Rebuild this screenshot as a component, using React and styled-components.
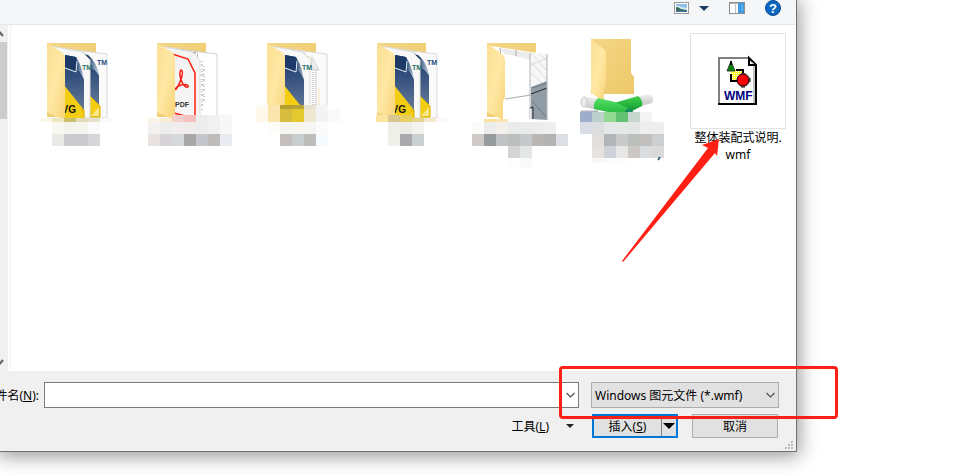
import React from 'react';
import styled, { createGlobalStyle } from "styled-components";

const GlobalStyle = createGlobalStyle`
    * {
        box-sizing: border-box;
    }

    body {
        margin: 0;
        background: #fff;
        color: #000;
        font-family: "Noto Sans", "Noto Sans CJK SC", sans-serif;
        font-size: 12px;
        line-height: 17px;
    }

    button, input, select {
        font: inherit;
        color: inherit;
    }

    svg {
        display: block;
        flex: none;
    }
`;

const Page = styled.div`
    position: relative;
    display: flex;
    flex-direction: column;
    min-height: 100vh;
    padding: 0 175px 22px 0;
    overflow: hidden;
`;

const Dialog = styled.main`
    flex: 1;
    display: flex;
    flex-direction: column;
    background: #f0f0f0;
    border: solid #707070;
    border-width: 0 1px 1px 0;
    box-shadow: 0 2px 18px 2px rgba(0, 0, 0, 0.42);
`;

const Toolbar = styled.header`
    display: flex;
    justify-content: flex-end;
    gap: 20px;
    height: 25px;
    padding-right: 15px;
    background: #f5f6f8;
    border-bottom: 1px solid #e4e6ea;
`;

const IconButton = styled.button`
    display: flex;
    align-items: center;
    gap: 10px;
    height: 16px;
    padding: 0;
    border: 0;
    background: none;
`;

const Body = styled.div`
    flex: 1;
    display: flex;
    background: #fff;
`;

const ScrollTrack = styled.div`
    display: flex;
    flex-direction: column;
    width: 8px;
    padding: 6px 0;
    background: #f0f0f0;
    overflow: hidden;
`;

const ScrollThumb = styled.div`
    flex: none;
    width: 7px;
    height: 77px;
    margin: 5px 0 auto;
    background: #cdcdcd;
`;

const FileList = styled.ul`
    flex: 1;
    display: grid;
    grid-template-columns: repeat(auto-fill, 96px);
    align-content: start;
    gap: 14px;
    margin: 0 0 0 2px;
    padding: 8px 0 0 19px;
    border-left: 1px solid #f3f3f3;
    list-style: none;
`;

const FileItem = styled.li`
    text-align: center;

    svg {
        overflow: visible;
    }
`;

const Thumb = styled.div`
    height: 96px;
    border: 1px solid #e2e2e2;
    border-radius: 1px;

    svg {
        margin: -1px;
    }
`;

const FileName = styled.div`
    padding: 0 4px;
    white-space: nowrap;
`;

const Footer = styled.footer`
    position: relative;
    display: flex;
    flex-direction: column;
    gap: 6px;
    padding: 11px 17px 13px 0;
`;

const Row = styled.div`
    display: flex;
    align-items: center;
    justify-content: flex-end;
`;

const ButtonRow = styled(Row)`
    padding-right: 1px;
`;

const NameLabel = styled.label`
    display: flex;
    justify-content: flex-end;
    width: 39px;
    margin-right: 5px;
    overflow: hidden;
    white-space: nowrap;
`;

const Field = styled.div`
    position: relative;
    flex: ${({ $width }) => $width ? 'none' : '1'};
    width: ${({ $width }) => $width || 'auto'};
    margin-right: ${({ $gap }) => $gap || '0'};

    svg {
        position: absolute;
        top: 10px;
        right: 4px;
        pointer-events: none;
    }
`;

const NameInput = styled.input`
    display: block;
    width: 100%;
    height: 26px;
    padding: 0 20px 0 4px;
    border: 1px solid #7a7a7a;
    background: #fff;
    outline: 0;
`;

const TypeSelect = styled.select`
    display: block;
    width: 100%;
    height: 26px;
    padding: 0 20px 0 3px;
    border: 1px solid #adadad;
    border-radius: 0;
    background: #e1e1e1;
    appearance: none;
`;

const ToolsButton = styled.button`
    display: flex;
    align-items: center;
    gap: 17px;
    margin-right: 18px;
    padding: 0;
    border: 0;
    background: none;
`;

const PushButton = styled.button`
    width: 86px;
    height: 24px;
    padding: 0;
    border: 1px solid #adadad;
    background: #e1e1e1;
`;

const SplitButton = styled.div`
    display: flex;
    width: 86px;
    height: 24px;
    margin-right: 14px;
    border: 2px solid #0078d7;
    background: #e1e1e1;
`;

const SplitPart = styled.button`
    display: flex;
    align-items: center;
    justify-content: center;
    flex: ${({ $menu }) => $menu ? 'none' : '1'};
    padding: ${({ $menu }) => $menu ? '0 1px' : '0'};
    border: 0;
    border-left: ${({ $menu }) => $menu ? '1px solid #808080' : '0'};
    background: none;
`;

const Grip = styled.svg`
    position: absolute;
    right: 3px;
    bottom: 2px;
`;

const MarkBox = styled.div`
    position: absolute;
    right: 134px;
    bottom: 55px;
    width: 279px;
    height: 53px;
    border: 3px solid #ff2015;
    border-radius: 4px;
    pointer-events: none;
`;

const MarkArrow = styled.svg`
    position: absolute;
    left: 620px;
    top: 137px;
    pointer-events: none;
`;

// rows of blurred-out name blocks: [y, height, first x, colours]
const mosaics = {
    drawings: [
        [85, 4, 10, ['#fbf7e6', '#eee7bd', '#cabf6c', '#e0dbb8', '#e6e1cf', '#fafafa']],
        [89, 12, 22, ['#f8f8f0', '#f4f3eb', '#f6f5ed', '#fafafa']],
        [101, 12, 22, ['#e9e9e7', '#cbcacc', '#cbcacc', '#d6d6d8']],
    ],
    pdf: [
        [82, 7, 32, ['#f5cfcc', '#f6bfbf', '#eeeded', '#f1f1f1', '#f7f7f7']],
        [85, 4, 8, ['#fbf4e6', '#f9ecd0']],
        [89, 12, 8, ['#f2f1ef', '#ededeb', '#f3eeee', '#efebeb', '#ececec', '#f0f0f0', '#f7f7f7']],
        [101, 12, 8, ['#e8e3e1', '#d8d3d8', '#d6d9d9', '#a8a8a8', '#c4c6cc', '#bdbcba', '#eaebf1']],
    ],
    mixed: [
        [72, 4, 6, ['#fdfaf0', '#fbe6ae', '#b5a02e', '#b8a436', '#e6e2d2', '#f3f3f3']],
        [76, 13, 6, ['#fdf8ea', '#fae5ae', '#d6bd40', '#e3c92f', '#eee8d3', '#f3f3f3', '#fafafa']],
        [89, 12, 18, ['#fdfcf9', '#f5f5f1', '#f6f5f0', '#f5f5f3', '#fbfbfb']],
        [101, 12, 30, ['#c4bfbe', '#c8cdce', '#bcbcba', '#f5fbff']],
    ],
    backup: [
        [82, 7, 16, ['#fbe3a0', '#d8c890', '#e5cf62']],
        [85, 4, 52, ['#e6d590', '#f4e9cd', '#fafafa']],
        [89, 12, 28, ['#efefe9', '#ecebe6', '#f2f2ee']],
        [101, 12, 28, ['#eff0ea', '#a9a8ac', '#cacfcf']],
    ],
    photos: [
        [86, 3, 14, ['#fbe0a0', '#fae3b4']],
        [89, 12, 2, ['#fbfbf9', '#ececec', '#f3efea', '#e9eaea', '#eaebeb', '#ececec', '#efefef']],
        [101, 12, 2, ['#cfcac8', '#969b9b', '#c0c2c4', '#bcbdbd', '#c6c8c9', '#b9b6b4', '#b3b3b3', '#dddfe5']],
        [113, 12, 38, ['#d5d5d5', '#e3e7e6']],
        [125, 10, 38, ['#fdfdfd', '#fafafa']],
    ],
    shared: [
        [79, 10, 0, ['#9eadca', '#bcd0cc', '#93d994', '#62c272', '#c7d6cf', '#f3f4f3']],
        [89, 12, 0, ['#d7dce6', '#dcdedf', '#e4e8e8', '#e5eae7', '#e4e6e6', '#eeeeee', '#eeeeee']],
        [101, 12, 12, ['#e3dfdc', '#b3b4b6', '#cbcacb', '#bcc0bd', '#c1c0be', '#cdced0']],
        [113, 12, 12, ['#e6e2df', '#cfd2d8', '#e7e7e6', '#cdc8c6', '#dadde0', '#dadada']],
        [125, 5, 12, ['#f8f8f8', '#fbfbfb', '#fcfcfc']],
    ],
};

const Mosaic = ({ rows }) => (
    <g shapeRendering="crispEdges">
        {rows.map(([y, height, start, colors]) => colors.map((color, i) => (
            <rect key={`${y}-${start}-${i}`} x={start + i * 12} y={y} width="12" height={height} fill={color} />
        )))}
    </g>
);

const Defs = styled.svg`
    position: absolute;
`;

const Gradients = () => (
    <Defs width="0" height="0" aria-hidden="true">
        <defs>
            <linearGradient id="flap" x1="0" y1="0" x2="1" y2="1">
                <stop offset="0" stopColor="#fadf92" />
                <stop offset="0.5" stopColor="#ffe8a4" />
                <stop offset="1" stopColor="#f7d377" />
            </linearGradient>
            <linearGradient id="back" x1="0" y1="0" x2="1" y2="1">
                <stop offset="0" stopColor="#f4d687" />
                <stop offset="1" stopColor="#ecc867" />
            </linearGradient>
            <linearGradient id="navy" x1="0" y1="0" x2="0" y2="1">
                <stop offset="0" stopColor="#203e6e" />
                <stop offset="0.35" stopColor="#304d7b" />
                <stop offset="1" stopColor="#667b99" />
            </linearGradient>
            <linearGradient id="curl" x1="0" y1="0" x2="1" y2="0">
                <stop offset="0" stopColor="#1c416b" />
                <stop offset="1" stopColor="#c9d7e4" />
            </linearGradient>
            <linearGradient id="pipe" x1="0" y1="0" x2="0" y2="1">
                <stop offset="0" stopColor="#5cdc6a" />
                <stop offset="0.5" stopColor="#37c94c" />
                <stop offset="1" stopColor="#2bb045" />
            </linearGradient>
            <linearGradient id="pipe-dark" x1="0" y1="0" x2="0" y2="1">
                <stop offset="0" stopColor="#45d050" />
                <stop offset="0.5" stopColor="#22b33b" />
                <stop offset="1" stopColor="#0c8039" />
            </linearGradient>
            <linearGradient id="cap" x1="0" y1="0" x2="0" y2="1">
                <stop offset="0" stopColor="#f1f1f1" />
                <stop offset="1" stopColor="#c4c4c4" />
            </linearGradient>
            <pattern id="dither" width="2" height="2" patternUnits="userSpaceOnUse">
                <rect width="2" height="2" fill="#ffff20" />
                <rect width="1" height="1" fill="#fff" />
            </pattern>
        </defs>
    </Defs>
);

const BackPage = () => (
    <path d="M29 15 L77 21 V85 H55 V20Z" fill="#fafafa" stroke="#d9d9d9" />
);

const DwgFront = () => (
    <g>
        <path d="M20 13 L52 19 L60 27 V85 H32Z" fill="#f8f8f8" stroke="#dedede" />
        <path d="M35 22 L46 24 Q49 38 54 46 V78 H34Z" fill="url(#navy)" />
        <path d="M35 22 L46 24 Q47 30 47 38 L35 35Z" fill="#1c3968" />
        <path d="M46 24 Q46 31 47 37 Q52 39 54 48 Q53 35 46 24Z" fill="url(#curl)" />
        <path d="M35 35 L46 39 L47 28" fill="none" stroke="#e5edf5" />
        <path d="M34 52 L54 77 V85 H34Z" fill="#f3cd12" />
        <path d="M51 77 H54 V85" fill="none" stroke="#d3a900" />
        <text x="46" y="80" textAnchor="end" fontFamily="Liberation Sans" fontWeight="bold" fontSize="10" fill="#111">VG</text>
        <text x="52" y="37" fontFamily="Liberation Sans" fontWeight="bold" fontSize="7" fill="#26706f">TM</text>
    </g>
);

const DwgBack = () => (
    <g>
        <path d="M36 18 L58 22 Q66 30 69 42 V75 H59 V26Z" fill="url(#navy)" />
        <path d="M58 22 Q61 26 61 35 Q66 37 69 43 Q67 29 58 22Z" fill="url(#curl)" />
        <path d="M60 63 L70 73 V84 H60Z" fill="#f3cd12" stroke="#d9b000" />
        <path d="M61 83 L69 74 V83Z" fill="#f9e68a" />
        <text x="67" y="32" fontFamily="Liberation Sans" fontWeight="bold" fontSize="7" fill="#1c4a78">TM</text>
    </g>
);

const FolderFlap = () => (
    <path d="M17 10 L33 20 Q35 22 35 26 V84 L32 86 L17 79Z" fill="url(#flap)" />
);

const DwgFolder = ({ single }) => (
    <g>
        <path d="M17 10 H66 V84 H17Z" fill="url(#back)" />
        <BackPage />
        {single ? (
            <g>
                <path d="M30 16 L60 24 L68 37 H61" fill="none" stroke="#eadfb7" />
                <path d="M62 24 L69 37 L61 36Z" fill="#ececec" stroke="#d4d4d4" />
                <path d="M63 39 V72 M66 37 V72" stroke="#cfcfcf" strokeDasharray="1 1" strokeWidth="2" />
                <path d="M69 55 V75" stroke="#efe6bd" />
            </g>
        ) : <DwgBack />}
        <DwgFront />
        <FolderFlap />
    </g>
);

const PdfFolder = () => (
    <g>
        <path d="M17 10 H66 V84 H17Z" fill="url(#back)" />
        <path d="M29 15 L77 21 V85 H55 V20Z" fill="#fff" stroke="#d0d0d0" />
        <path d="M42 17 L58 20 L57 25 L46 21" fill="none" stroke="#999" strokeDasharray="2 1 1 2" />
        <path d="M62 28 V78 M64 33 V68" stroke="#999" strokeDasharray="1 2 2 3 1 1" />
        <path d="M20 13 L52 19 L60 27 V83 H32Z" fill="#f4f4f4" stroke="#ddd" />
        <path d="M29 20 L48 26 L55 40 V82 M34 80 L45 83" fill="none" stroke="#fb1b10" strokeWidth="1.5" />
        <path d="M41 37 C44 38 42 46 37 55 C35 59 34 54 41 52 C49 50 50 55 46 54 C42 52 38 41 41 37Z" fill="none" stroke="#f32015" strokeWidth="1.5" />
        <text x="35" y="74" fontFamily="Liberation Sans" fontWeight="bold" fontSize="7" fill="#333">PDF</text>
        <FolderFlap />
    </g>
);

const PhotoFolder = () => (
    <g>
        <path d="M17 10 H66 V84 H17Z" fill="url(#back)" />
        <path d="M21 13 L60 19 L77 21 V87 L60 86 H32Z" fill="#fff" />
        <path d="M29 15 L60 20 V27 L45 23 L35 21Z" fill="#ececec" />
        <path d="M61 20 L77 21 V48 L61 54Z" fill="#f7f7f7" />
        <path d="M61 54 L77 48 V87 L61 86Z" fill="#909da7" />
        <path d="M61 61 L77 55" stroke="#26292c" />
        <path d="M62 55 L77 50 M62 68 L76 84" stroke="#6d7982" />
        <path d="M35 66 L61 62 M30 15 L31 23 M46 17 V23" stroke="#aaa" />
        <path d="M61 20 L77 38 M61 29 L77 47 M61 40 L72 50 M61 32 L77 25 M69 20 L77 28" stroke="#ccc" strokeWidth="0.7" />
        <path d="M60 20 V86 M77 21 V87" stroke="#adb0b3" />
        <path d="M60 75 L63 74 V86" fill="none" stroke="#333" />
        <path d="M61 76 V86" stroke="#fff" />
        <path d="M17 10 L33 22 Q35 24 35 27 V64 L33 69 V87 L17 79Z" fill="url(#flap)" />
    </g>
);

const SharedFolder = () => (
    <g>
        <path d="M11 6 H51 V40 L54 44 V61 H11Z" fill="url(#back)" />
        <path d="M11 6 L25 17 Q26 18 26 21 V51 L24 56 V69 L11 60Z" fill="url(#flap)" />
        <path d="M1 78 H18 V89 H1Z" fill="#9eb2d2" stroke="#b6b6b6" />
        <path d="M59 63 L70 61 Q75 64 72 70 L61 73Z" fill="url(#cap)" />
        <path d="M34 70 L58 63 Q63 66 62 73 L46 81Z" fill="url(#pipe-dark)" />
        <path d="M4 63 L18 66 V77 L4 74 Q-1 68 4 63Z" fill="url(#cap)" />
        <ellipse cx="4" cy="69" rx="3" ry="5" fill="#ebebeb" stroke="#cfcfcf" />
        <path d="M18 65 L35 69 L48 75 Q44 79 46 83 L14 76 Q13 69 18 65Z" fill="url(#pipe)" />
        <ellipse cx="49" cy="79" rx="4" ry="3" fill="#178e64" />
    </g>
);

const WmfIcon = () => (
    <svg width="96" height="96" viewBox="0 0 96 96" aria-hidden="true">
        <path d="M28 24 H59 L67 32 V71 H28Z" fill="#fff" />
        <path d="M64 33 V70" stroke="#c4c4c4" strokeWidth="2" />
        <path d="M29 71 V25 H58" fill="none" stroke="#808080" strokeWidth="2" />
        <path d="M28 71 H66 V32 L59 25 V32 H66" fill="none" stroke="#000" strokeWidth="2" />
        <path d="M61 29 L64 31" stroke="#c0c0c0" />
        <rect x="41" y="37" width="11" height="11" fill="url(#dither)" />
        <path d="M46 37 H53 V42 M41 41 V48 H47" fill="none" stroke="#000" strokeWidth="2" />
        <path d="M41 28 L45 38 H37Z" fill="#008000" stroke="#33473a" />
        <path d="M41 28 V32" stroke="#000" strokeWidth="2" />
        <path d="M51 40 H56 L60 44 V50 L56 54 H50 L47 50 V44Z" fill="#c0c0c0" />
        <path d="M51 41 H55 M60 45 V49 M51 54 H55" stroke="#000" />
        <circle cx="53" cy="47" r="6" fill="#f00" stroke="#000" />
        <text x="34" y="67" fontFamily="Liberation Sans" fontWeight="bold" fontSize="12" fill="#000080">WMF</text>
    </svg>
);

const folders = [
    { id: 'drawings', art: <DwgFolder /> },
    { id: 'pdf', art: <PdfFolder /> },
    { id: 'mixed', art: <DwgFolder single /> },
    { id: 'backup', art: <DwgFolder /> },
    { id: 'photos', art: <PhotoFolder /> },
    { id: 'shared', art: <SharedFolder /> },
];

const Chevron = () => (
    <svg width="9" height="6" viewBox="0 0 9 6" aria-hidden="true">
        <path d="M0.5 1 L4.5 5 L8.5 1" fill="none" stroke="#505050" strokeWidth="1.2" />
    </svg>
);

const ScrollArrow = ({ up }) => (
    <svg width="8" height="6" viewBox="5 0 8 6" aria-hidden="true">
        <path d={up ? 'M0 0.5 L4 0.5 L8 5' : 'M4 5.5 L8 1'} fill="none" stroke="#606060" strokeWidth="2" />
    </svg>
);

const Caret = ({ color = '#222', width = 8 }) => (
    <svg width={width} height={width / 2} viewBox="0 0 8 4" aria-hidden="true">
        <path d="M0 0 H8 L4 4Z" fill={color} />
    </svg>
);

const App = () => {
    return (
        <Page>
            <GlobalStyle />
            <Gradients />
            <Dialog>
                <Toolbar>
                    <IconButton aria-label="视图">
                        <svg width="15" height="12" viewBox="0 0 15 12">
                            <rect x="0.5" y="0.5" width="14" height="11" fill="#fff" stroke="#9a9a9a" />
                            <rect x="2" y="2" width="11" height="8" fill="#8dbfe9" />
                            <path d="M2 4 Q5 3 7 5 L13 6 V8 H2Z" fill="#d9ecf8" />
                            <path d="M2 5 Q5 5 7 7 L13 8 V9 H2Z" fill="#3f6e61" />
                            <path d="M2 9 H13 V10 H2Z" fill="#3b78b8" />
                        </svg>
                        <Caret color="#1f3a63" width={10} />
                    </IconButton>
                    <IconButton aria-label="预览窗格">
                        <svg width="16" height="12" viewBox="0 0 16 12">
                            <rect x="0.5" y="0.5" width="15" height="11" fill="#fff" stroke="#8c8c8c" />
                            <path d="M1 1.5 H15" stroke="#b5b5b5" />
                            <path d="M6.5 2 V11" stroke="#b5c6d5" />
                            <rect x="9" y="1" width="6" height="10" fill="#3d9ae3" />
                            <path d="M13 3 V9" stroke="#7fc0f2" />
                        </svg>
                    </IconButton>
                    <IconButton aria-label="帮助">
                        <svg width="16" height="16" viewBox="0 0 16 16">
                            <circle cx="8" cy="8" r="7.5" fill="#0b66c0" stroke="#0a4c94" />
                            <text x="8" y="13" textAnchor="middle" fontFamily="Liberation Sans" fontWeight="bold" fontSize="13" fill="#fff">?</text>
                        </svg>
                    </IconButton>
                </Toolbar>
                <Body>
                    <ScrollTrack>
                        <ScrollArrow up />
                        <ScrollThumb />
                        <ScrollArrow />
                    </ScrollTrack>
                    <FileList>
                        {folders.map(({ id, art }) => (
                            <FileItem key={id}>
                                <svg width="96" height="136" viewBox="0 0 96 136" aria-hidden="true">
                                    {art}
                                    <Mosaic rows={mosaics[id]} />
                                    {id === 'shared' && <path d="M80 124 L78 127" stroke="#24506d" strokeWidth="1.5" />}
                                </svg>
                            </FileItem>
                        ))}
                        <FileItem>
                            <Thumb><WmfIcon /></Thumb>
                            <FileName>整体装配式说明.<br />wmf</FileName>
                        </FileItem>
                    </FileList>
                </Body>
                <Footer>
                    <Row>
                        <NameLabel htmlFor="file-name"><span>文件名(<u>N</u>):</span></NameLabel>
                        <Field $gap="12px">
                            <NameInput id="file-name" type="text" />
                            <Chevron />
                        </Field>
                        <Field $width="188px">
                            <TypeSelect aria-label="文件类型" defaultValue="wmf">
                                <option value="wmf">Windows 图元文件 (*.wmf)</option>
                            </TypeSelect>
                            <Chevron />
                        </Field>
                    </Row>
                    <ButtonRow>
                        <ToolsButton><span>工具(<u>L</u>)</span><Caret /></ToolsButton>
                        <SplitButton>
                            <SplitPart><span>插入(<u>S</u>)</span></SplitPart>
                            <SplitPart $menu aria-label="插入选项"><Caret color="#000" width={12} /></SplitPart>
                        </SplitButton>
                        <PushButton>取消</PushButton>
                    </ButtonRow>
                    <Grip width="8" height="8" viewBox="0 0 8 8" aria-hidden="true">
                        <path d="M6 0h2v2h-2z M3 3h2v2h-2z M6 3h2v2h-2z M0 6h2v2h-2z M3 6h2v2h-2z M6 6h2v2h-2z" fill="#bcbcbc" />
                    </Grip>
                </Footer>
            </Dialog>
            <MarkArrow width="100" height="126" viewBox="0 0 100 126" aria-hidden="true">
                <path d="M99 2 L82 8 L88 11 L2 124 L3 125 L95 16 L97 19Z" fill="#ff2015" />
            </MarkArrow>
            <MarkBox />
        </Page>
    );
};

export default App;
